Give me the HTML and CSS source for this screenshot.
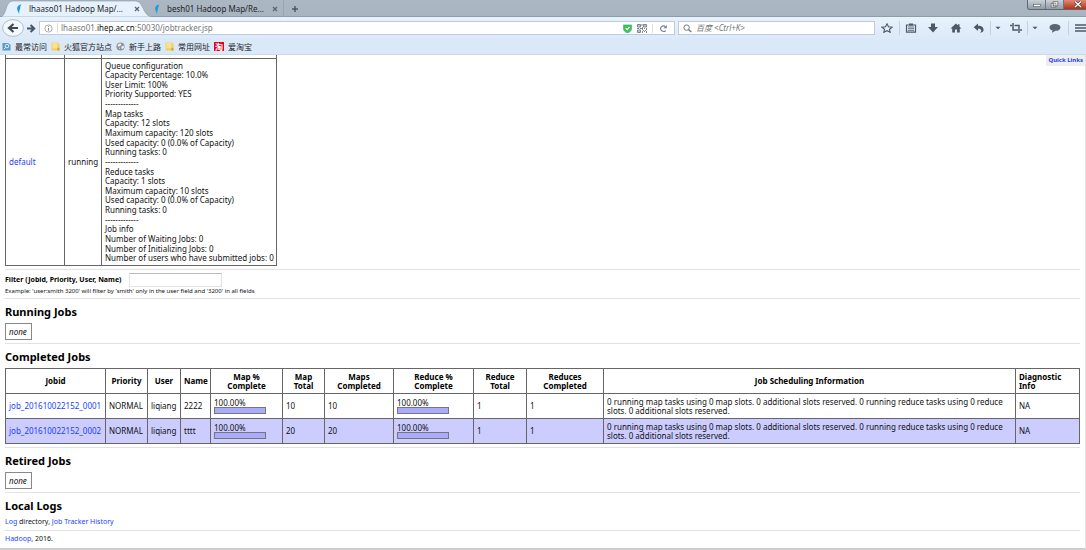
FILE: index.html
```html
<!DOCTYPE html>
<html lang="en">
<head>
<meta charset="utf-8">
<title>lhaaso01 Hadoop Map/Reduce Administration</title>
<link rel="stylesheet" href="styles.css">
</head>
<body>
<svg class="defs" width="0" height="0" aria-hidden="true">
  <symbol id="feather" viewBox="0 0 10 12"><path d="M7.500 .5C3 .8 1.500 4 2.500 7.500L4.500 12L4.800 8C6.500 6 5 3 7.500 .5Z" fill="#1e9be0"/></symbol>
  <symbol id="folder" viewBox="0 0 10 10"><path d="M.5 .5h7l2 2V9.500h-9z" fill="#f3cf66"/><path d="M1.500 1h5.500v6H1.500z" fill="#fae193"/><path d="M7 6.500h2.500v3H7z" fill="#d9a92f"/></symbol>
</svg>

<header class="browser">
  <div class="titlebar">
    <div class="tabs">
      <div class="tab tab-active">
        <svg class="tab-shape" viewBox="0 0 156 17" preserveAspectRatio="none"><path d="M0 17C7 17 5 1 13 1H138C147 1 145 17 156 17Z" fill="#e6f1fb" stroke="#8b9aa7" stroke-width=".6"/></svg>
        <svg class="tab-icon"><use href="#feather"/></svg>
        <span class="tab-label">lhaaso01 Hadoop Map/...</span>
        <button class="tab-close" aria-label="Close tab"><svg viewBox="0 0 6 6"><path d="M1 1l4 4M5 1L1 5"/></svg></button>
      </div>
      <div class="tab">
        <svg class="tab-icon"><use href="#feather"/></svg>
        <span class="tab-label">besh01 Hadoop Map/Re...</span>
        <button class="tab-close" aria-label="Close tab"><svg viewBox="0 0 6 6"><path d="M1 1l4 4M5 1L1 5"/></svg></button>
      </div>
      <button class="new-tab" aria-label="New tab"><svg viewBox="0 0 8 8"><path d="M4 1v6M1 4h6"/></svg></button>
    </div>
    <div class="window-buttons">
      <button aria-label="Minimize"><svg viewBox="0 0 18 9"><rect x="6" y="4.500" width="7" height="2" fill="#fff" stroke="#555" stroke-width=".6"/></svg></button>
      <button aria-label="Restore"><svg viewBox="0 0 18 9"><path d="M7.500 1.500h5v4.500h-5zM5.500 3.200h5v4h-5z" fill="#fff" stroke="#555" stroke-width=".7"/><path d="M7.200 4.700h1.700v1H7.200z" fill="#555"/></svg></button>
      <button class="window-close" aria-label="Close"><svg viewBox="0 0 22 9"><path d="M11 1.500l6 5.500M17 1.500L11 7" stroke="#5b3030" stroke-width="2.800"/><path d="M11 1.500l6 5.500M17 1.500L11 7" stroke="#fff" stroke-width="1.500"/></svg></button>
    </div>
  </div>

  <div class="navbar">
    <button class="back" aria-label="Back"><svg viewBox="0 0 22 18"><ellipse cx="11" cy="9" rx="10.400" ry="8.400" fill="#f3f8fd" stroke="#9fb2c4" stroke-width=".8"/><path d="M16 9H8M11.500 5L7 9l4.500 4" fill="none" stroke="#3f4a54" stroke-width="2.200"/></svg></button>
    <button class="forward" aria-label="Forward"><svg viewBox="0 0 10 10"><path d="M0 5h8M4 1.200L8 5 4 8.800" fill="none" stroke="#4a5560" stroke-width="2.200"/></svg></button>
    <div class="urlbar">
      <svg class="info" viewBox="0 0 10 10"><circle cx="5" cy="5" r="4" fill="none" stroke="#8b8b8b" stroke-width=".8"/><path d="M5 4.400v3M5 2.400v1" stroke="#777"/></svg>
      <div class="url">lhaaso01.<b>ihep.ac.cn</b>:50030/jobtracker.jsp</div>
      <svg class="shield" viewBox="0 0 10 10"><path d="M.5 1h9v4c0 2.500-2 4-4.500 5C2.500 9 .5 7.500 .5 5z" fill="#48bd4e" stroke="#32aeb0" stroke-width=".7"/><path d="M3 4.700l1.600 1.600L7.300 3.200" fill="none" stroke="#fff" stroke-width="1.200"/></svg>
      <svg class="qr" viewBox="0 0 10 9"><path d="M.5 .5h3v2.500h-3zM6.500 .5h3v2.500h-3zM.5 6h3v2.500h-3z" fill="none" stroke="#7e858b"/><path d="M4.500 0h1v2h-1zM0 4h2v1H0zM3 4h2v1H3zM5 3h1v3H5zM7 4h1v1H7zM9 4h1v2H9zM6 6h1v1H6zM8 6h1v1H8zM5 7h1v2H5zM7 7h1v1H7zM9 7h1v2H9zM1.500 1h1v1.500h-1zM7.500 1h1v1.500h-1zM1.500 6.500h1v1.500h-1z" fill="#7e858b"/></svg>
      <button class="reload" aria-label="Reload"><svg viewBox="0 0 10 10"><path d="M7.500 7.500A3.500 3 0 1 1 7.200 2.700" fill="none" stroke="#75828d" stroke-width="1.300"/><path d="M8.700 1v3.700H5z" fill="#75828d"/></svg></button>
    </div>
    <label class="search">
      <svg viewBox="0 0 10 10"><circle cx="4" cy="4" r="3" fill="none" stroke="#777" stroke-width="1.100"/><path d="M6 6l3.300 3" stroke="#777" stroke-width="1.500"/></svg>
      <input type="text" placeholder="百度 &lt;Ctrl+K&gt;" aria-label="Search">
    </label>
    <div class="toolbar">
      <button class="w-bookmark" aria-label="Bookmark"><svg viewBox="0 0 12 10"><path d="M6 .8l1.500 2.900 3.700.4-2.700 2.200.7 3L6 7.700 2.800 9.300l.7-3L.8 4.100l3.700-.4z" fill="none" stroke="#4d5964" stroke-width="1.100"/></svg></button>
      <button class="split w-list" aria-label="Bookmarks"><svg viewBox="0 0 12 10"><path d="M1.500 2h9v7.200h-9z" fill="none" stroke="#4d5964" stroke-width="1.200"/><path d="M4 .5h4v2H4z" fill="#4d5964"/><path d="M3 4h6M3 5.700h6M3 7.400h6" stroke="#4d5964" stroke-width=".8"/></svg></button>
      <button class="w-down" aria-label="Downloads"><svg viewBox="0 0 12 10"><path d="M4 .5h4V4h3L6 9.500 1 4h3z" fill="#4d5964"/></svg></button>
      <button class="w-home" aria-label="Home"><svg viewBox="0 0 12 10"><path d="M6 .5L.5 5.500h1.700v4H5v-3h2v3h2.800v-4h1.700L9.500 3.700V1.200H8v1.200z" fill="#4d5964"/></svg></button>
      <button class="w-undo" aria-label="Undo"><svg viewBox="0 0 12 10"><path d="M5 .5v2.200c4 0 6 2 5.500 4.800C10 9 9 9.500 7 9.700 9.500 7.500 8 5.600 5 5.700V8L.7 4.200z" fill="#4d5964"/></svg></button>
      <button class="split w-menu" aria-label="Undo list"><svg viewBox="0 0 12 10"><path d="M3.500 3.700h5L6 6.200z" fill="#4d5964"/></svg></button>
      <button class="w-crop" aria-label="Screenshot"><svg viewBox="0 0 12 10"><path d="M3 0v7h5M0 2.500h2M4.500 2.500H9V10M10 7h2" fill="none" stroke="#4d5964" stroke-width="1.500"/></svg></button>
      <button class="split w-menu" aria-label="Screenshot list"><svg viewBox="0 0 12 10"><path d="M3.500 3.700h5L6 6.200z" fill="#4d5964"/></svg></button>
      <button class="w-chat" aria-label="Chat"><svg viewBox="0 0 12 10"><path d="M6 1c3.300 0 5.500 1.400 5.500 3.400S9.300 7.800 6.500 7.800L3 9.800l.4-2.500C1.500 6.700.5 5.700.5 4.400.5 2.400 2.700 1 6 1z" fill="#5a6670"/></svg></button>
      <button class="split w-main" aria-label="Menu"><svg viewBox="0 0 12 10"><path d="M1 2h11M1 5h11M1 8h11" stroke="#4d5964" stroke-width="1.600"/></svg></button>
    </div>
  </div>

  <nav class="bookmarks">
    <a href="#"><svg viewBox="0 0 10 10"><path d="M.5 1h6l3 2v6.500h-9z" fill="#5a9cc6"/><circle cx="5.500" cy="4.500" r="2" fill="none" stroke="#e8f4fc"/><path d="M4 6L2 8" stroke="#e8f4fc"/></svg>最常访问</a>
    <a href="#"><svg><use href="#folder"/></svg>火狐官方站点</a>
    <a href="#"><svg viewBox="0 0 10 10"><circle cx="5" cy="5" r="4.500" fill="#8b9299"/><path d="M2 2.500l3-1 1 1.500-2 2H2zM6 5l2.500-1 .5 2-2 2-1-1zM3 6.500h1.500V8z" fill="#e7edf2"/></svg>新手上路</a>
    <a href="#"><svg><use href="#folder"/></svg>常用网址</a>
    <a href="#"><span class="tao">淘</span>爱淘宝</a>
  </nav>
</header>

<main class="page">
  <a class="quick-links" href="#">Quick Links</a>

  <table class="grid queue">
    <colgroup><col class="q-name"><col class="q-state"><col></colgroup>
    <tbody>
      <tr class="cut"><td></td><td></td><td></td></tr>
      <tr>
        <td><a href="#">default</a></td>
        <td>running</td>
        <td>
          <ul class="lines">
            <li>Queue configuration</li><li>Capacity Percentage: 10.0%</li><li>User Limit: 100%</li><li>Priority Supported: YES</li>
            <li>-------------</li>
            <li>Map tasks</li><li>Capacity: 12 slots</li><li>Maximum capacity: 120 slots</li><li>Used capacity: 0 (0.0% of Capacity)</li><li>Running tasks: 0</li>
            <li>-------------</li>
            <li>Reduce tasks</li><li>Capacity: 1 slots</li><li>Maximum capacity: 10 slots</li><li>Used capacity: 0 (0.0% of Capacity)</li><li>Running tasks: 0</li>
            <li>-------------</li>
            <li>Job info</li><li>Number of Waiting Jobs: 0</li><li>Number of Initializing Jobs: 0</li><li>Number of users who have submitted jobs: 0</li>
          </ul>
        </td>
      </tr>
    </tbody>
  </table>

  <section class="filter">
    <div class="filter-row"><label for="filter">Filter (Jobid, Priority, User, Name)</label><input id="filter" type="text"></div>
    <p>Example: 'user:smith 3200' will filter by 'smith' only in the user field and '3200' in all fields</p>
  </section>

  <section>
    <h2>Running Jobs</h2>
    <div class="none">none</div>
  </section>

  <section>
    <h2>Completed Jobs</h2>
    <table class="grid jobs">
      <colgroup><col class="c-id"><col class="c-priority"><col class="c-user"><col class="c-name"><col class="c-map"><col class="c-maptotal"><col class="c-maps"><col class="c-reduce"><col class="c-redtotal"><col class="c-reduces"><col><col class="c-diag"></colgroup>
      <thead>
        <tr><th>Jobid</th><th>Priority</th><th>User</th><th>Name</th><th>Map %<br>Complete</th><th>Map<br>Total</th><th>Maps<br>Completed</th><th>Reduce %<br>Complete</th><th>Reduce<br>Total</th><th>Reduces<br>Completed</th><th>Job Scheduling Information</th><th class="left">Diagnostic<br>Info</th></tr>
      </thead>
      <tbody>
        <tr><td><a href="#">job_201610022152_0001</a></td><td>NORMAL</td><td>liqiang</td><td>2222</td><td>100.00%<div class="bar"><div style="width:100%"></div></div></td><td>10</td><td>10</td><td>100.00%<div class="bar"><div style="width:100%"></div></div></td><td>1</td><td>1</td><td>0 running map tasks using 0 map slots. 0 additional slots reserved. 0 running reduce tasks using 0 reduce<br>slots. 0 additional slots reserved.</td><td>NA</td></tr>
        <tr><td><a href="#">job_201610022152_0002</a></td><td>NORMAL</td><td>liqiang</td><td>tttt</td><td>100.00%<div class="bar"><div style="width:100%"></div></div></td><td>20</td><td>20</td><td>100.00%<div class="bar"><div style="width:100%"></div></div></td><td>1</td><td>1</td><td>0 running map tasks using 0 map slots. 0 additional slots reserved. 0 running reduce tasks using 0 reduce<br>slots. 0 additional slots reserved.</td><td>NA</td></tr>
      </tbody>
    </table>
  </section>

  <section>
    <h2>Retired Jobs</h2>
    <div class="none">none</div>
  </section>

  <section>
    <h2>Local Logs</h2>
    <p class="logs"><a href="#">Log</a> directory, <a href="#">Job Tracker History</a></p>
  </section>

  <footer><a href="#">Hadoop</a>, 2016.</footer>
</main>
</body>
</html>
```
FILE: styles.css
```css
* { box-sizing: border-box; }
body {
  margin: 0;
  min-height: 100vh;
  display: flex;
  flex-direction: column;
  background: #fff;
  color: #111;
  font: 8px/10px "Noto Sans", "Noto Sans CJK SC", sans-serif;
}
button { border: 0; padding: 0; background: none; font: inherit; display: flex; align-items: center; justify-content: center; }
svg { display: block; flex: none; }
.defs { position: absolute; }
a { color: #1a3fff; text-decoration: none; }
h2, p, ul { margin: 0; padding: 0; list-style: none; }

/* Browser frame */
.titlebar {
  height: 17px;
  display: flex;
  justify-content: space-between;
  align-items: flex-start;
  background: linear-gradient(#abb7c2, #a8b4bf);
  border-bottom: 1px solid #8f9ba6;
}
.tabs { display: flex; height: 17px; }
.tab { position: relative; display: flex; align-items: center; width: 130px; padding: 1px 5px 0 0; color: #1f262c; }
.tab-active { width: 153px; padding: 1px 13px 0 15px; }
.tab-shape { position: absolute; left: 0; top: 0; width: 100%; height: 17px; }
.tab-icon { position: relative; width: 9px; height: 10px; margin-right: 5px; }
.tab-label { position: relative; flex: 1; white-space: nowrap; }
.tab-close { position: relative; width: 7px; height: 10px; }
.tab-close svg { width: 6px; height: 6px; stroke: #59646e; stroke-width: 1.2; }
.new-tab { width: 22px; height: 17px; border-left: 1px solid #98a5b0; }
.new-tab svg { width: 8px; height: 8px; stroke: #4e5963; stroke-width: 1.5; }
.window-buttons { display: flex; border: 1px solid #5f6972; border-top: 0; border-right: 0; border-radius: 0 0 0 3px; overflow: hidden; }
.window-buttons button { width: 18px; height: 9px; background: linear-gradient(#c9d1d8, #929ca6); border-right: 1px solid #6c7680; }
.window-buttons svg { width: 100%; height: 9px; }
.window-buttons .window-close { width: 22px; background: linear-gradient(#dc8b78, #b92f14); border-right: 0; }

.navbar { height: 22px; display: flex; align-items: center; padding-left: 2px; background: linear-gradient(#e8f2fc, #dce9f8); }
.back svg { width: 22px; height: 18px; }
.forward { width: 15px; height: 13px; }
.forward svg { width: 9px; height: 9px; }
.urlbar, .search { height: 14px; display: flex; align-items: center; background: #fff; border: 1px solid #bdccdd; }
.urlbar { flex: 1; padding-right: 6px; }
.info { width: 9px; height: 9px; margin: 0 4px; }
.url { flex: 1; border-left: 1px solid #ddd; padding-left: 3px; color: #777; white-space: nowrap; }
.url b { color: #111; font-weight: 400; }
.shield { width: 9px; height: 9px; margin-right: 5px; }
.qr { width: 10px; height: 9px; margin-right: 5px; }
.reload { border-left: 1px solid #ddd; padding-left: 6px; }
.reload svg { width: 9px; height: 9px; }
.search { width: 197px; margin-left: 3px; padding-left: 4px; }
.search svg { width: 9px; height: 9px; margin-right: 4px; }
.search input { flex: 1; min-width: 0; height: 12px; border: 0; padding: 0; background: none; font: italic 8px/12px "Noto Sans", "Noto Sans CJK SC", sans-serif; }
.search input::placeholder { color: #777; }
.toolbar { display: flex; height: 14px; }
.toolbar button { height: 14px; }
.toolbar svg { width: 12px; height: 10px; }
.split { border-left: 1px solid #c6d1dc; }
.w-bookmark { width: 24px; }
.w-list { width: 22px; }
.w-down { width: 23px; }
.w-home { width: 24px; }
.w-undo { width: 22px; }
.w-menu { width: 15px; }
.w-crop { width: 22px; }
.w-chat { width: 26px; }
.toolbar .w-main { width: 18px; padding-left: 5px; overflow: hidden; }

.bookmarks { height: 16px; display: flex; align-items: center; gap: 4px; padding-left: 2px; background: #dae9f8; border-bottom: 1px solid #cbdbea; }
.bookmarks a { display: flex; align-items: center; gap: 4px; color: #222; white-space: nowrap; }
.bookmarks svg { width: 9px; height: 9px; }
.tao { width: 10px; height: 9px; background: #e60020; color: #fff; font-weight: 700; line-height: 9px; text-align: center; }

/* Job tracker page */
.page { position: relative; flex: 1; padding: 0 5px 0 5px; border-right: 1px solid #e3e3e3; border-bottom: 2px solid #ccc; }
.quick-links { position: absolute; top: 0; right: 0; padding: 0 2px; background: #eee; font-size: 6px; line-height: 11px; font-weight: 700; }

.grid { border-collapse: collapse; table-layout: fixed; border: 1px solid #666; }
.grid th, .grid td { border: 1px solid #666; padding: 2px 3px; text-align: left; }
.queue { width: 272px; margin-bottom: 3px; border-top: 0; }
.queue .cut td { height: 3px; padding: 0; border-top: 0; }
.q-name { width: 59px; }
.q-state { width: 37px; }
.lines { height: 202px; display: flex; flex-direction: column; justify-content: space-between; line-height: 9px; white-space: nowrap; }

section, footer { border-top: 1px solid #e2e2e2; }
h2 { padding: 6px 0 4px; font-size: 11px; line-height: 14px; font-weight: 700; color: #000; }
.filter { padding: 3px 0 2px; }
.filter-row { display: flex; align-items: center; gap: 8px; height: 14px; }
.filter label { font-size: 7px; font-weight: 700; color: #000; }
.filter input { width: 93px; height: 14px; border: 1px solid #e2e2e2; border-top-color: #bbb; padding: 0 2px; font: inherit; }
.filter p { font-size: 6px; line-height: 9px; }
.none { width: 27px; height: 17px; margin-bottom: 3px; border: 1px solid #888; padding: 0 3px; line-height: 15px; font-style: italic; }

.jobs { width: 100%; margin-bottom: 3px; line-height: 9px; }
.jobs tr { height: 25px; }
.jobs th { text-align: center; color: #000; }
.jobs .left { text-align: left; }
.jobs th, .jobs td { white-space: nowrap; }
.jobs tbody tr:nth-child(even) { background: #ccf; }
.c-id { width: 100px; }
.c-priority { width: 42px; }
.c-user { width: 33px; }
.c-name { width: 30px; }
.c-map { width: 72px; }
.c-maptotal { width: 42px; }
.c-maps { width: 69px; }
.c-reduce { width: 80px; }
.c-redtotal { width: 53px; }
.c-reduces { width: 77px; }
.c-diag { width: 64px; }
.bar { width: 52px; height: 7px; border: 1px solid #777; }
.bar div { height: 5px; background: #aaf; }
.logs { padding-bottom: 3px; font-size: 7px; }
footer { padding-top: 3px; font-size: 7px; }
```
